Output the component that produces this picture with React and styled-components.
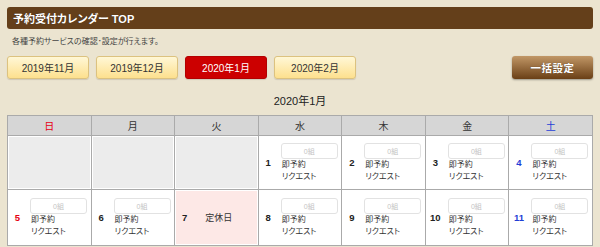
import React from "react";
import styled, { createGlobalStyle } from "styled-components";

const Global = createGlobalStyle`
  html, body { margin: 0; padding: 0; background: #ebe4d0; }
  body { font-family: "Liberation Sans", "Noto Sans CJK JP", sans-serif; color: #333; }
  * { box-sizing: border-box; }
`;

const Page = styled.div`
  padding: 7px;
  width: 600px;
  font-feature-settings: "palt";
`;

const TitleBar = styled.div`
  height: 22px;
  background: #643f1a;
  border-radius: 3px;
  display: flex;
  align-items: center;
  padding-left: 6px;
  color: #fff;
  font-size: 11px;
  font-weight: bold;
  text-shadow: 0 0 1px rgba(0,0,0,0.4);
`;

const Lead = styled.p`
  margin: 7px 0 0 5px;
  font-size: 8px;
  line-height: 12px;
  color: #444;
`;

const ButtonRow = styled.div`
  margin-top: 8px;
  display: flex;
  align-items: center;
  gap: 7px;
`;

const MonthButton = styled.button`
  width: 82px;
  height: 23px;
  border-radius: 3px;
  font-family: inherit;
  font-size: 10px;
  padding: 0;
  cursor: pointer;
  border: 1px solid ${(p) => (p.$active ? "#b30000" : "#dcc27f")};
  background: ${(p) =>
    p.$active ? "#cc0000" : "linear-gradient(#fff7d6, #fde08e)"};
  color: ${(p) => (p.$active ? "#fff" : "#333")};
  box-shadow: 0 1px 1px rgba(0,0,0,0.12);
`;

const BulkButton = styled.button`
  margin-left: auto;
  width: 81px;
  height: 23px;
  border: none;
  border-radius: 3px;
  font-family: inherit;
  font-size: 10.5px;
  font-weight: bold;
  letter-spacing: 0.5px;
  color: #fff;
  padding: 0;
  background: linear-gradient(#c19766, #6a3f16);
  box-shadow: 0 1px 2px rgba(0,0,0,0.35);
  text-shadow: 0 0 1px rgba(0,0,0,0.5);
`;

const MonthTitle = styled.div`
  margin-top: 15px;
  text-align: center;
  font-size: 11px;
  line-height: 14px;
  color: #222;
`;

const Calendar = styled.div`
  margin-top: 7px;
  width: 586px;
  display: grid;
  grid-template-columns: repeat(7, 1fr);
  grid-template-rows: 19px 53px 55px;
  gap: 1px;
  padding: 1px;
  background: #aaa;
`;

const HeadCell = styled.div`
  background: #d6d6d6;
  display: flex;
  align-items: center;
  justify-content: center;
  font-size: 10px;
  color: ${(p) => p.$color || "#333"};
`;

const EmptyCell = styled.div`
  background: #ececec;
  box-shadow: inset 0 0 0 1px #fff;
`;

const DayCell = styled.div`
  background: ${(p) => (p.$holiday ? "#fde8e6" : "#fff")};
  box-shadow: ${(p) => (p.$holiday ? "inset 0 0 0 1px #fff" : "none")};
  display: flex;
  align-items: center;
`;

const DayNum = styled.span`
  width: 19px;
  text-align: center;
  font-size: 9.5px;
  font-weight: bold;
  color: ${(p) => p.$color || "#222"};
`;

const DayBody = styled.div`
  margin-left: 3px;
  display: flex;
  flex-direction: column;
`;

const CountBox = styled.div`
  width: 57px;
  height: 16px;
  border: 1px solid #e2e2e2;
  border-radius: 3px;
  background: #fff;
  display: flex;
  align-items: center;
  justify-content: center;
  font-size: 7px;
  color: #c4c4c4;
`;

const Line = styled.div`
  font-size: 8px;
  line-height: 12px;
  color: #333;
  padding-left: 1px;
`;

const Closed = styled.span`
  margin-left: 11px;
  font-size: 9px;
  color: #333;
`;

const RED = "#e60012";
const BLUE = "#1f3fd6";

const weekdays = [
  { label: "日", color: RED },
  { label: "月" },
  { label: "火" },
  { label: "水" },
  { label: "木" },
  { label: "金" },
  { label: "土", color: BLUE },
];

const cells = [
  null, null, null, 1, 2, 3, 4,
  5, 6, 7, 8, 9, 10, 11,
];

function Day({ n, idx }) {
  const col = idx % 7;
  const color = col === 0 ? RED : col === 6 ? BLUE : undefined;
  if (n === 7) {
    return (
      <DayCell $holiday>
        <DayNum $color={color}>{n}</DayNum>
        <Closed>定休日</Closed>
      </DayCell>
    );
  }
  return (
    <DayCell>
      <DayNum $color={color}>{n}</DayNum>
      <DayBody>
        <CountBox>0組</CountBox>
        <Line>即予約</Line>
        <Line>リクエスト</Line>
      </DayBody>
    </DayCell>
  );
}

export default function App() {
  return (
    <Page>
      <Global />
      <TitleBar>予約受付カレンダー TOP</TitleBar>
      <Lead>各種予約サービスの確認･設定が行えます。</Lead>
      <ButtonRow>
        <MonthButton>2019年11月</MonthButton>
        <MonthButton>2019年12月</MonthButton>
        <MonthButton $active>2020年1月</MonthButton>
        <MonthButton>2020年2月</MonthButton>
        <BulkButton>一括設定</BulkButton>
      </ButtonRow>
      <MonthTitle>2020年1月</MonthTitle>
      <Calendar>
        {weekdays.map((w) => (
          <HeadCell key={w.label} $color={w.color}>{w.label}</HeadCell>
        ))}
        {cells.map((n, i) =>
          n === null ? <EmptyCell key={i} /> : <Day key={i} n={n} idx={i} />
        )}
      </Calendar>
    </Page>
  );
}
